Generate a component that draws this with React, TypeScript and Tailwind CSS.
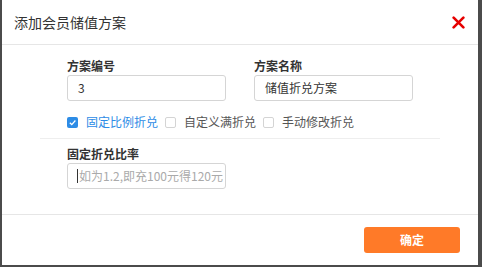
import React from 'react'

const font = { fontFamily: '"Noto Sans CJK SC", "Noto Sans", sans-serif' }

function Check({ checked, label }: { checked?: boolean; label: string }) {
  return (
    <label className="flex items-center gap-[8px]">
      {checked ? (
        <span className="flex h-[11px] w-[11px] items-center justify-center rounded-[2px] bg-[#2d8ce6]">
          <svg width="9" height="9" viewBox="0 0 10 10">
            <path d="M2 5.2 L4.2 7.3 L8.2 2.8" fill="none" stroke="#fff" strokeWidth="1.4" />
          </svg>
        </span>
      ) : (
        <span className="h-[11px] w-[11px] rounded-[2px] border border-[#d4d4d4] bg-white" />
      )}
      <span className={checked ? 'text-[#2d8ce6]' : 'text-[#555]'}>{label}</span>
    </label>
  )
}

export default function App() {
  return (
    <div className="h-[267px] w-[482px] bg-[#4b4b4b]" style={font}>
      <div className="ml-[2px] flex h-[265px] w-[476px] flex-col bg-white">
        <div className="flex h-[45px] items-center justify-between border-b border-[#e6e6e6] pl-[12px] pr-[13px]">
          <span className="text-[14px] text-[#333]">添加会员储值方案</span>
          <svg width="13" height="13" viewBox="0 0 12 12">
            <path d="M1.5 1.5 L10.5 10.5 M10.5 1.5 L1.5 10.5" stroke="#e60000" strokeWidth="2.4" strokeLinecap="round" />
          </svg>
        </div>

        <div className="px-[65px] pt-[13px] text-[12px]">
          <div className="flex gap-[28px]">
            <div className="flex flex-col gap-[1px]">
              <span className="h-[16px] font-bold leading-[16px] text-[#333]">方案编号</span>
              <div className="flex h-[26px] w-[159px] items-center rounded-[3px] border border-[#d5d5d5] px-[10px] text-[#333]">3</div>
            </div>
            <div className="flex flex-col gap-[1px]">
              <span className="h-[16px] font-bold leading-[16px] text-[#333]">方案名称</span>
              <div className="flex h-[26px] w-[159px] items-center rounded-[3px] border border-[#d5d5d5] px-[10px] text-[#333]">储值折兑方案</div>
            </div>
          </div>
          <div className="mt-[13px] flex h-[16px] items-center gap-[7px] leading-[16px]">
            <Check checked label="固定比例折兑" />
            <Check label="自定义满折兑" />
            <Check label="手动修改折兑" />
          </div>
        </div>

        <div className="mx-[38px] mt-[8px] border-t border-[#eeeeee]" />

        <div className="px-[65px] pt-[7px] text-[12px]">
          <div className="flex flex-col gap-[1px]">
            <span className="h-[16px] font-bold leading-[16px] text-[#333]">固定折兑比率</span>
            <div className="flex h-[26px] w-[159px] items-center rounded-[3px] border border-[#d5d5d5] pl-[9px] text-[#aaa]">
              <span className="mr-[1px] h-[14px] w-px bg-[#333]" />
              如为1.2,即充100元得120元
            </div>
          </div>
        </div>

        <div className="mt-[25px] flex justify-end border-t border-[#e6e6e6] pr-[18px] pt-[12px]">
          <button className="h-[26px] w-[96px] rounded-[3px] bg-[#ff7a28] text-[12px] font-bold text-white">确定</button>
        </div>
      </div>
    </div>
  )
}
